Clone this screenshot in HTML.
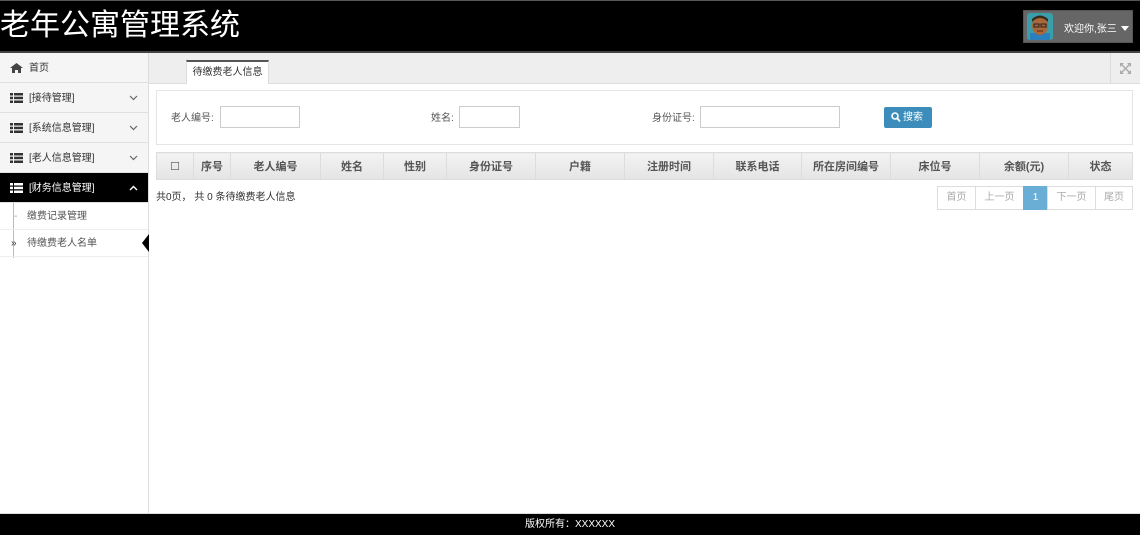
<!DOCTYPE html>
<html><head><meta charset="utf-8"><style>
*{box-sizing:border-box;margin:0;padding:0}
body{width:1140px;height:535px;position:relative;overflow:hidden;background:#fff;font-family:"Liberation Sans","Noto Sans CJK SC",sans-serif;font-size:10px;color:#333}
.abs{position:absolute}
#hdr{left:0;top:0;width:1140px;height:53px;background:#000;border-top:1px solid #555;border-bottom:2px solid #444}
#title{left:0;top:6px;color:#fff;font-size:30px;line-height:40px}
#user{left:1023px;top:10px;width:110px;height:33px;background:#666;border:1px solid #555}
#side{left:0;top:53px;width:149px;height:460px;border-right:1px solid #ddd;background:#fff}
.mi{position:absolute;left:0;width:148px;height:30px;background:#f5f5f5;border-bottom:1px solid #e0e0e0;line-height:31px;padding-left:29px;font-size:10px;color:#333}
.mi.act{background:#000;color:#fff}
.ic{position:absolute;left:10px;top:10px;width:13px;height:10px}
.chev{position:absolute;right:10px;top:12px;width:9px;height:6px}
.sub{position:absolute;left:0;width:148px;height:27px;border-bottom:1px solid #eee;line-height:27px;padding-left:27px;color:#555}
#tabbar{left:149px;top:53px;width:991px;height:31px;background:#eee;border-bottom:1px solid #ddd}
#tab{left:186px;top:60px;width:83px;height:24px;background:#fff;border-top:2px solid #555;border-left:1px solid #ddd;border-right:1px solid #ddd;text-align:center;line-height:22px;font-size:10px}
#panel{left:156px;top:90px;width:977px;height:55px;border:1px solid #e5e5e5}
.lbl{position:absolute;top:112px;font-size:10px;color:#555;line-height:14px}
.inp{position:absolute;top:106px;height:22px;border:1px solid #ccc;background:#fff}
#btn{left:884px;top:107px;width:48px;height:21px;background:#3c8dbc;border-radius:2px;color:#fff;line-height:21px;font-size:10px;padding-left:19px}
table{position:absolute;left:156px;top:152px;width:977px;border-collapse:collapse;height:27px}
th{background:linear-gradient(#f3f3f3,#e4e4e4);border:1px solid #ddd;font-size:11px;color:#555;font-weight:bold;height:27px;text-align:center;padding:0}
#info{left:156px;top:188px;font-size:10px;color:#333}
.pg{position:absolute;top:186px;height:24px;border:1px solid #ddd;line-height:22px;text-align:center;color:#aaa;font-size:10px;background:#fff}
#foot{left:0;top:513px;width:1140px;height:22px;background:#000;color:#fff;text-align:center;line-height:22px;font-size:10px;border-top:1px solid #ddd}
</style></head><body>
<div id="hdr" class="abs"></div>
<div id="title" class="abs">老年公寓管理系统</div>
<div id="user" class="abs">
<svg class="abs" style="left:3px;top:2px" width="26" height="27" viewBox="0 0 26 27"><rect width="26" height="27" rx="3" fill="#3a9eaa"/><rect x="3" y="20" width="20" height="7" fill="#2a7fbf"/><ellipse cx="13" cy="13" rx="8" ry="9" fill="#a8683a"/><path d="M5 9 Q13 1 21 9 L21 6 Q13 -1 5 6Z" fill="#3a2a1a"/><rect x="7" y="11" width="5" height="3" fill="none" stroke="#222" stroke-width="1"/><rect x="14" y="11" width="5" height="3" fill="none" stroke="#222" stroke-width="1"/><path d="M10 18 h6" stroke="#5a2a10"/></svg>
<div class="abs" style="left:40px;top:9px;color:#fff;font-size:10px">欢迎你,张三</div>
<div class="abs" style="left:97px;top:15px;border-left:4px solid transparent;border-right:4px solid transparent;border-top:5px solid #fff"></div>
</div>
<div id="side" class="abs">
<div class="mi" style="top:0;background:#f5f5f5"><svg class="ic" viewBox="0 0 13 10"><path d="M6.5 0 L13 5 L11 5 L11 10 L8 10 L8 7 L5 7 L5 10 L2 10 L2 5 L0 5Z" fill="#444"/></svg>首页</div>
<div class="mi" style="top:30px"><svg class="ic" viewBox="0 0 13 10"><g fill="#333"><rect width="3" height="2.5"/><rect x="4" width="9" height="2.5"/><rect y="3.7" width="3" height="2.5"/><rect x="4" y="3.7" width="9" height="2.5"/><rect y="7.5" width="3" height="2.5"/><rect x="4" y="7.5" width="9" height="2.5"/></g></svg>[接待管理]<svg class="chev" viewBox="0 0 9 6"><path d="M1 1 L4.5 4.5 L8 1" fill="none" stroke="#666" stroke-width="1.2"/></svg></div>
<div class="mi" style="top:60px"><svg class="ic" viewBox="0 0 13 10"><g fill="#333"><rect width="3" height="2.5"/><rect x="4" width="9" height="2.5"/><rect y="3.7" width="3" height="2.5"/><rect x="4" y="3.7" width="9" height="2.5"/><rect y="7.5" width="3" height="2.5"/><rect x="4" y="7.5" width="9" height="2.5"/></g></svg>[系统信息管理]<svg class="chev" viewBox="0 0 9 6"><path d="M1 1 L4.5 4.5 L8 1" fill="none" stroke="#666" stroke-width="1.2"/></svg></div>
<div class="mi" style="top:90px"><svg class="ic" viewBox="0 0 13 10"><g fill="#333"><rect width="3" height="2.5"/><rect x="4" width="9" height="2.5"/><rect y="3.7" width="3" height="2.5"/><rect x="4" y="3.7" width="9" height="2.5"/><rect y="7.5" width="3" height="2.5"/><rect x="4" y="7.5" width="9" height="2.5"/></g></svg>[老人信息管理]<svg class="chev" viewBox="0 0 9 6"><path d="M1 1 L4.5 4.5 L8 1" fill="none" stroke="#666" stroke-width="1.2"/></svg></div>
<div class="mi act" style="top:120px"><svg class="ic" viewBox="0 0 13 10"><g fill="#fff"><rect width="3" height="2.5"/><rect x="4" width="9" height="2.5"/><rect y="3.7" width="3" height="2.5"/><rect x="4" y="3.7" width="9" height="2.5"/><rect y="7.5" width="3" height="2.5"/><rect x="4" y="7.5" width="9" height="2.5"/></g></svg>[财务信息管理]<svg class="chev" viewBox="0 0 9 6"><path d="M1 5 L4.5 1.5 L8 5" fill="none" stroke="#fff" stroke-width="1.4"/></svg></div>
<div class="abs" style="left:13px;top:150px;width:1px;height:55px;background:#bbb"></div>
<div class="sub" style="top:150px"><span class="abs" style="left:14px;top:0;color:#999">-</span>缴费记录管理</div>
<div class="sub" style="top:177px"><span class="abs" style="left:11px;top:0;color:#333">»</span>待缴费老人名单<span class="abs" style="left:142px;top:4px;border-top:9px solid transparent;border-bottom:9px solid transparent;border-right:7px solid #000"></span></div>
</div>
<div id="tabbar" class="abs"><div class="abs" style="left:961px;top:0;width:30px;height:30px;border-left:1px solid #ddd"><svg class="abs" style="left:9px;top:10px" width="11" height="11" viewBox="0 0 11 11"><path d="M1 1 L10 10 M10 1 L1 10" stroke="#aaa" stroke-width="1.4"/><path d="M0 0h4L0 4Z M11 0h-4l4 4Z M0 11h4L0 7Z M11 11h-4l4-4Z" fill="#aaa"/></svg></div></div>
<div id="tab" class="abs">待缴费老人信息</div>
<div id="panel" class="abs"></div>
<div class="lbl" style="left:171px">老人编号:</div><div class="inp" style="left:220px;width:80px"></div>
<div class="lbl" style="left:431px">姓名:</div><div class="inp" style="left:459px;width:61px"></div>
<div class="lbl" style="left:652px">身份证号:</div><div class="inp" style="left:700px;width:140px"></div>
<div id="btn" class="abs"><svg class="abs" style="left:7px;top:5px" width="10" height="11" viewBox="0 0 10 11"><circle cx="4" cy="4" r="3" fill="none" stroke="#fff" stroke-width="1.6"/><path d="M6 6 L9 9.5" stroke="#fff" stroke-width="1.8"/></svg>搜索</div>
<table><tr>
<th style="width:37px;font-weight:normal">☐</th><th style="width:37px">序号</th><th style="width:90px">老人编号</th><th style="width:63px">姓名</th><th style="width:63px">性别</th><th style="width:89px">身份证号</th><th style="width:89px">户籍</th><th style="width:89px">注册时间</th><th style="width:88px">联系电话</th><th style="width:89px">所在房间编号</th><th style="width:89px">床位号</th><th style="width:89px">余额(元)</th><th>状态</th>
</tr></table>
<div id="info" class="abs">共0页，  共 0 条待缴费老人信息</div>
<div class="pg" style="left:937px;width:39px">首页</div>
<div class="pg" style="left:975px;width:49px">上一页</div>
<div class="pg" style="left:1023px;width:25px;background:#6aaed6;border-color:#6aaed6;color:#fff">1</div>
<div class="pg" style="left:1047px;width:49px">下一页</div>
<div class="pg" style="left:1095px;width:38px">尾页</div>
<div id="foot" class="abs">版权所有：XXXXXX</div>
</body></html>
